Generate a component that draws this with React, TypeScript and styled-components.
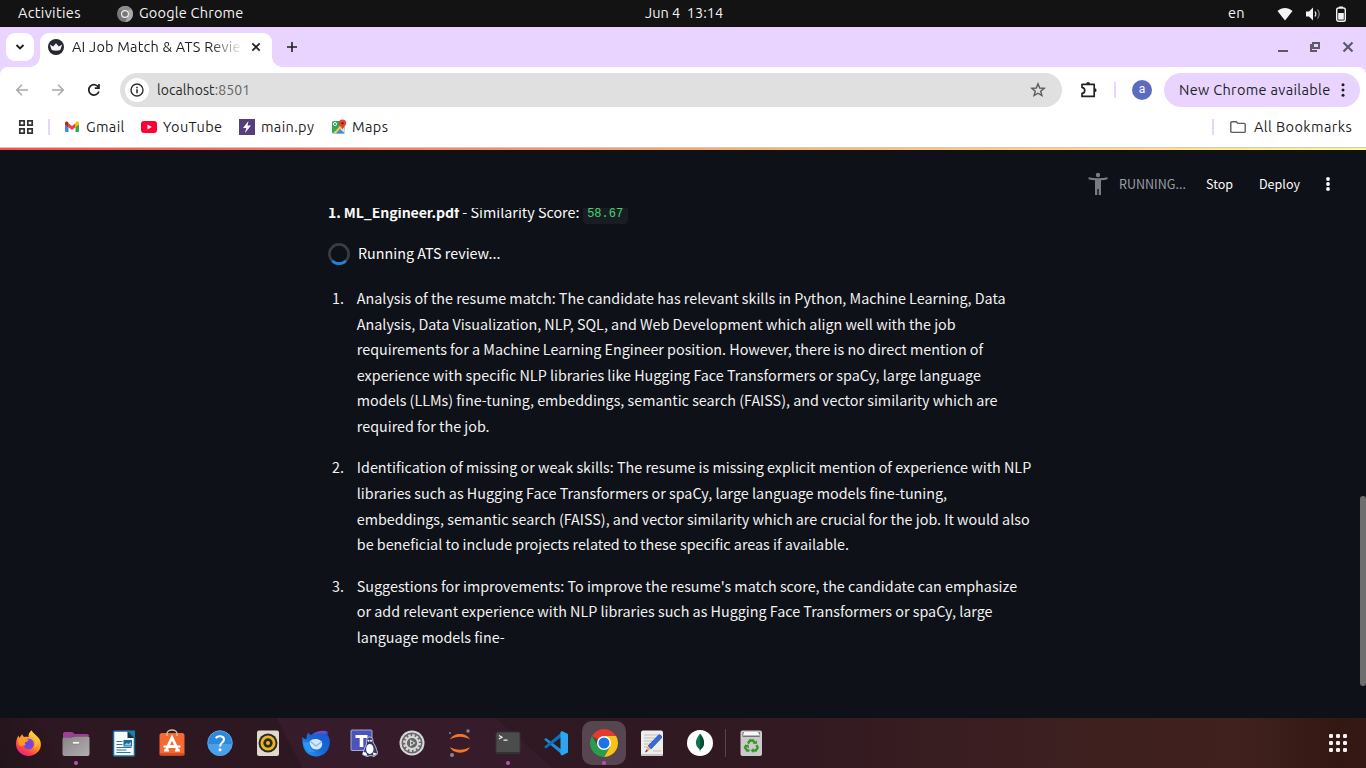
import React from "react";
import styled, { createGlobalStyle } from "styled-components";

const GlobalStyle = createGlobalStyle`
  *, *::before, *::after { box-sizing: border-box; }
  html, body { margin: 0; padding: 0; }
  body { width: 1366px; height: 768px; overflow: hidden; background: #0e1117; }
  svg { display: block; flex: none; }
`;

const uiFont = `"Ubuntu", "Noto Sans", "Open Sans", sans-serif`;
const appFont = `"Noto Sans CJK SC", "Noto Sans", sans-serif`;

const Desktop = styled.div`
  width: 1366px;
  height: 768px;
  display: flex;
  flex-direction: column;
  overflow: hidden;
  font-family: ${uiFont};
`;

/* Fixed-width single-line label; $w keeps neighbours aligned. */
const Label = styled.span<{ $w: number; $ls?: number; $size?: number }>`
  width: ${(p) => p.$w}px;
  flex: none;
  white-space: nowrap;
  font-size: ${(p) => p.$size ?? 14.5}px;
  letter-spacing: ${(p) => p.$ls ?? 0}px;
`;

/* ---------- GNOME top bar ---------- */
const SystemBar = styled.header`
  height: 27px;
  flex: none;
  background: #131313;
  color: #f2f2f2;
  display: grid;
  grid-template-columns: 1fr auto 1fr;
  align-items: center;
  line-height: 25px;
`;
const SystemLabel = styled(Label)`
  padding-bottom: 2px;
`;
const SystemLeft = styled.div`
  display: flex;
  align-items: center;
  padding-left: 18px;
`;
const AppMenu = styled.div`
  display: flex;
  align-items: center;
  gap: 6px;
  margin-left: 36px;
`;
const Clock = styled(SystemLabel)`
  white-space: pre;
`;
const SystemRight = styled.div`
  display: flex;
  align-items: center;
  justify-content: flex-end;
  padding-right: 20px;
`;
const Tray = styled.div`
  display: flex;
  align-items: center;
  gap: 13px;
  margin-left: 32px;
`;

/* ---------- Browser chrome ---------- */
const TabStrip = styled.div`
  height: 40px;
  flex: none;
  background: #e8d4ff;
  display: flex;
  align-items: flex-start;
  padding: 6px 11px 0 6px;
  color: #1f1f1f;
`;
const TabSearch = styled.button`
  width: 28px;
  height: 28px;
  border: 0;
  padding: 0;
  border-radius: 9px;
  background: #fff;
  display: grid;
  place-items: center;
`;
const Tab = styled.div`
  position: relative;
  width: 232px;
  height: 34px;
  margin-left: 6px;
  padding: 0 11px 6px 8px;
  border-radius: 9px 9px 0 0;
  background: #fff;
  display: flex;
  align-items: center;
  &::before, &::after {
    content: "";
    position: absolute;
    bottom: 0;
    width: 10px;
    height: 10px;
  }
  &::before { left: -10px; background: radial-gradient(circle at 0 0, transparent 9.5px, #fff 10px); }
  &::after { right: -10px; background: radial-gradient(circle at 100% 0, transparent 9.5px, #fff 10px); }
`;
const TabTitle = styled(Label)`
  margin: 0 10px 0 8px;
  line-height: 28px;
  -webkit-mask-image: linear-gradient(90deg, #000 138px, transparent 171px);
  mask-image: linear-gradient(90deg, #000 138px, transparent 171px);
`;
const StripIcon = styled.div<{ $ml: number }>`
  height: 28px;
  margin-left: ${(p) => p.$ml}px;
  display: flex;
  align-items: center;
`;
const WindowControls = styled.div`
  margin-left: auto;
  height: 28px;
  display: flex;
  align-items: center;
  gap: 19px;
`;
const ToolbarWrap = styled.div`
  flex: none;
  height: 81px;
  background: #e8d4ff;
`;
const ToolbarPanel = styled.div`
  height: 81px;
  background: #fff;
  border-radius: 8px 8px 0 0;
  border-bottom: 1px solid #c9c9cf;
  color: #1f1f1f;
`;
const Toolbar = styled.div`
  height: 46px;
  display: flex;
  align-items: center;
  padding: 0 6px 0 14px;
`;
const ToolbarLabel = styled(Label)`
  padding-bottom: 2px;
`;
const NavButtons = styled.div`
  display: flex;
  gap: 20px;
  width: 106px;
`;
const Omnibox = styled.div`
  width: 942px;
  height: 34px;
  margin-right: 17px;
  border-radius: 17px;
  background: #e0e0e0;
  display: flex;
  align-items: center;
  padding: 0 16px 0 5px;
`;
const SiteInfo = styled.div`
  width: 24px;
  height: 24px;
  border-radius: 50%;
  background: #fff;
  display: grid;
  place-items: center;
  margin-right: 8px;
`;
const Url = styled(Label)`
  flex: 1;
  color: #2a2a2a;
  span { color: #636363; }
`;
const Divider = styled.i<{ $mx: string }>`
  width: 2px;
  height: 16px;
  background: #e8d4ff;
  margin: ${(p) => p.$mx};
  flex: none;
`;
const Avatar = styled.div`
  width: 20px;
  height: 20px;
  border-radius: 50%;
  background: #5c6bc0;
  color: #fff;
  font: 12px/18px Roboto, sans-serif;
  text-align: center;
`;
const UpdateChip = styled.div`
  width: 196px;
  height: 34px;
  margin-left: 12px;
  border-radius: 17px;
  background: #e8d4ff;
  display: flex;
  align-items: center;
  padding-left: 15px;
`;
const Bookmarks = styled.div`
  height: 28px;
  display: flex;
  align-items: center;
  padding: 0 14px 0 18px;
`;
const Bookmark = styled.div<{ $gap: number; $mr?: number }>`
  display: flex;
  align-items: center;
  gap: ${(p) => p.$gap}px;
  margin-right: ${(p) => p.$mr ?? 0}px;
`;
const Spacer = styled.div`flex: 1;`;

/* ---------- Streamlit page ---------- */
const Page = styled.main`
  position: relative;
  flex: 1;
  min-height: 0;
  background: #0e1117;
  color: #fafafa;
  font-family: ${appFont};
  overflow: hidden;
`;
const Decoration = styled.div`
  height: 2px;
  background: linear-gradient(90deg, #ff4b4b, #fffd80);
`;
const PageHeader = styled.div`
  position: relative;
  z-index: 1;
  height: 58px;
  background: #0e1117;
  display: flex;
  align-items: center;
  justify-content: flex-end;
  padding: 10px 35px 0 0;
  line-height: 20px;
`;
const Status = styled.div`
  display: flex;
  align-items: center;
  gap: 11px;
  color: #9a9da4;
`;
const Content = styled.div`
  width: 710px;
  margin: -9px 0 0 328px;
  font-size: 14.33px;
  line-height: 25.6px;
`;
const Match = styled.div`
  height: 26px;
  white-space: nowrap;
  b { font-weight: 700; font-size: 14.1px; letter-spacing: -0.1px; }
`;
const Score = styled.code`
  font: 12px/16px "Liberation Mono", monospace;
  color: #3dd56d;
  background: #1a1c24;
  border-radius: 4px;
  padding: 3px 4.5px;
  vertical-align: 1px;
`;
const Spinner = styled.div`
  display: flex;
  align-items: center;
  gap: 8px;
  height: 26px;
  margin-top: 15px;
  white-space: nowrap;
  svg { margin-top: 2px; }
`;
const Findings = styled.ol`
  list-style: none;
  margin: 18.92px 0 0;
  padding: 0;
  color: #f2f2f2;
`;
const Finding = styled.li`
  display: flex;
  margin-bottom: 16px;
`;
const Number = styled.span`
  width: 28.8px;
  padding-left: 4px;
  flex: none;
`;
const Line = styled.span`
  display: block;
  white-space: nowrap;
`;
const ScrollThumb = styled.div`
  position: absolute;
  right: 0;
  top: 348px;
  width: 6px;
  height: 190px;
  border-radius: 3px;
  background: #6e6e6f;
`;

/* ---------- Dock ---------- */
const DockBar = styled.nav`
  height: 50px;
  flex: none;
  display: flex;
  align-items: center;
  padding: 0 12px 0 4px;
  background:
    linear-gradient(63deg, #22131a 0, #2d1721 60px, #2d1822 269px, transparent 270px),
    linear-gradient(41deg, #361c2b 362px, transparent 363px),
    linear-gradient(90deg, #2f1923 480px, #2f1821 640px, #331a22 800px, #3e201f 1100px, #40211e 1240px, #331713 1340px, #351814 1366px);
`;
const DockItem = styled.div<{ $active?: boolean; $running?: boolean }>`
  position: relative;
  width: 44px;
  height: 44px;
  margin: 0 2px;
  border-radius: 10px;
  display: grid;
  place-items: center;
  background: ${(p) => (p.$active ? "#574650" : "transparent")};
  &::after {
    content: "";
    display: ${(p) => (p.$running ? "block" : "none")};
    position: absolute;
    left: 20px;
    bottom: 0;
    width: 4px;
    height: 4px;
    border-radius: 50%;
    background: #b752b5;
  }
`;
const DockSeparator = styled.i`
  width: 1px;
  height: 28px;
  background: #5b434b;
  margin: 0 1px;
`;
const DockGrid = styled.div`
  margin-left: auto;
  width: 32px;
  display: grid;
  place-items: center;
`;

const Dots = ({ color, h, r, gap }: { color: string; h: number; r: number; gap: number }) => (
  <svg width="6" height={h} viewBox={`-3 ${-h / 2} 6 ${h}`} fill={color}>
    <circle cy={-gap} r={r} /><circle r={r} /><circle cy={gap} r={r} />
  </svg>
);

const ChromeMono = () => (
  <svg width="16" height="16" viewBox="0 0 16 16">
    <circle cx="8" cy="8" r="8" fill="#777" />
    <path d="M8 0A8 8 0 0 1 16 8 8 8 0 0 1 8 16L11.5 10 11.5 5z" fill="#aaa" />
    <path d="M1.1 4A8 8 0 0 1 15 4H8z" fill="#8c8c8c" />
    <circle cx="8" cy="8" r="4" fill="#eee" /><circle cx="8" cy="8" r="2.8" fill="#777" />
  </svg>
);

const dockIcons: { name: string; running?: boolean; active?: boolean; art: React.ReactNode }[] = [
  { name: "firefox", art: <>
    <defs>
      <linearGradient id="ff" x1="22" y1="3" x2="8" y2="26" gradientUnits="userSpaceOnUse"><stop stopColor="#ffe23f" /><stop offset=".45" stopColor="#ff9a20" /><stop offset=".8" stopColor="#ff3d49" /><stop offset="1" stopColor="#e6218b" /></linearGradient>
      <radialGradient id="ffp"><stop stopColor="#5a4be0" /><stop offset="1" stopColor="#9140d0" /></radialGradient>
    </defs>
    <path d="M17.500 1.300c1 1.800 2.200 3 4.200 4.600 3 2.600 5.200 5.200 5.200 9.400C26.900 22 21.200 27 14.500 27S2 21.700 2 15c0-3.500 1-6.600 2.500-8.500.2 1.300.7 1.900 1.300 2.400C6.200 7.100 7.300 6 8.500 5.200c0 1.500.7 2.300 1.800 2.800 1.200-.4 3-.3 4.200.2C14.200 5.600 15.500 3 17.500 1.300z" fill="url(#ff)" />
    <circle cx="14.500" cy="15" r="5.500" fill="url(#ffp)" />
    <path d="M4.500 9.500c2-1.700 5-1.400 6.500 0 1 .9 2.700.8 3.700 1-.4 1.600-2 2-3.100 2.600-.9.500-.8 2-.2 3.200-3-.3-3.300 2-5.400.7C4 15.500 4 12 4.500 9.500z" fill="#ff9b25" />
    <path d="M19 8c3 3 3.500 8 .5 11 4-1 5-5.500 3.500-9-.8-1-2.500-2-4-2z" fill="#ffc52e" opacity=".75" />
  </> },
  { name: "files", running: true, art: <>
    <defs><linearGradient id="fl" x1="0" y1="0" x2="1" y2="1"><stop stopColor="#868484" /><stop offset="1" stopColor="#b0aeae" /></linearGradient></defs>
    <path d="M1 5a2 2 0 0 1 2-2h7l3 2h12a2 2 0 0 1 2 2v6H1z" fill="#9b3f98" />
    <path d="M1 9l8-1 3-1h15v7H1z" fill="#702d70" />
    <path d="M0.500 10a1.500 1.500 0 0 1 1.500-1.500h7l3-1h14a1.500 1.500 0 0 1 1.500 1.500v16a2 2 0 0 1-2 2h-23a2 2 0 0 1-2-2z" fill="url(#fl)" />
    <rect x="10.500" y="12.500" width="7" height="2.500" rx="1" fill="#f5f5f5" stroke="#777" strokeWidth=".5" />
  </> },
  { name: "writer", art: <>
    <path d="M4.500 2h14l6 6v18a1 1 0 0 1-1 1h-19a1 1 0 0 1-1-1V3a1 1 0 0 1 1-1z" fill="#f7f9fa" stroke="#176b94" strokeWidth="1.500" />
    <path d="M18 1.500h7v7z" fill="#1682b0" /><path d="M17.500 2l7 7h-7z" fill="#08384f" />
    <g stroke="#2676a4" strokeWidth="1.200"><path d="M6.500 12.500h6M6.500 15.500h6M6.500 18.500h15M6.500 21h10M6.500 23.500h14" /></g>
    <rect x="13.500" y="11" width="8.500" height="6.500" fill="#1d6b99" /><path d="M14.500 16l2-2 2 1 2.500-2v3.500h-6.500z" fill="#90cbe7" />
  </> },
  { name: "software", art: <>
    <rect x="1.500" y="4" width="25" height="22.500" rx="2.500" fill="#f46a32" /><rect x="1.500" y="24" width="25" height="2.500" rx="1" fill="#d94f25" />
    <path d="M9 7V5a5 4 0 0 1 10 0v2" fill="none" stroke="#d7b997" strokeWidth="1.500" />
    <path d="M8 21.500l6-13 6 13M10 17.500h8" fill="none" stroke="#fff" strokeWidth="2.800" /><path d="M6 21.500h5M17 21.500h5M5.500 17.500h17" stroke="#fff" strokeWidth="1.800" />
  </> },
  { name: "help", art: <>
    <circle cx="14" cy="14" r="12.300" fill="#2a89dc" stroke="#67b4ef" strokeWidth=".8" /><path d="M2 15a12 12 0 0 0 24 0z" fill="#4aa1e8" />
    <path d="M10 9.300C11 6.500 18 6.400 18 10.500c0 3-4 3.200-4 7" fill="none" stroke="#fff" strokeWidth="2.100" /><circle cx="14" cy="20.800" r="1.500" fill="#fff" />
  </> },
  { name: "music", art: <>
    <rect x="3" y="1.500" width="22" height="25.500" rx="2" fill="#e1d9cd" /><circle cx="14" cy="14" r="9.500" fill="#2b2b2b" />
    <circle cx="14" cy="14" r="7.500" fill="#edb61b" /><circle cx="14" cy="14" r="4.700" fill="#2b2b2b" /><circle cx="14" cy="14" r="2" fill="#edb61b" />
  </> },
  { name: "thunderbird", art: <>
    <defs><linearGradient id="tb" x1="1" y1="0" x2="0" y2="1"><stop stopColor="#1a56cf" /><stop offset=".5" stopColor="#1668d8" /><stop offset="1" stopColor="#2a9af5" /></linearGradient></defs>
    <path d="M.3 8c1.500 2 3 2.300 4.500 1.500C4.300 7 5 5 6.500 3.500 7 5 8 6 9.500 6 12 3 16 2 19.500 2.300c3-.8 5.500-.3 7.200 1.700-1 .2-1.500.8-1.300 2C28 9 28.500 13.500 27 18c-1.700 5.500-6.500 9-12.500 9.500C7 27.500 1.500 22.500.8 15 .5 12.500 0 10.500.3 8z" fill="url(#tb)" />
    <path d="M11 6c3.500-4 9-5 14.500-3.500-1.500.2-2 1-1.500 2.200-4.500-1-9-.6-13 1.300z" fill="#7748d0" />
    <path d="M7.500 12.500C9.500 10 13 9.500 16 10.300c2.500.8 4.500 2.700 4.200 5C19.700 19 17.500 20.500 14 20.500c-3.500 0-6.500-3.500-6.500-8z" fill="#d5e9fb" />
    <path d="M8.500 12.500l5.500 4.500 6-4.500" fill="none" stroke="#84b7ea" strokeWidth="1.300" />
    <path d="M.8 13c2 .5 4.500.5 6.200 0 .5 6 3 9 7 9.500-5.500 2-10.500.5-13.200-9.500z" fill="#2a98f3" />
  </> },
  { name: "teams", art: <>
    <rect x="1" y="1" width="21" height="20.500" rx="1" fill="#4b53bc" stroke="#c3c5e9" strokeWidth=".8" />
    <path d="M5.500 6h12v3h-4.200v9H9.700V9H5.500z" fill="#fff" />
    <path d="M19.500 8c2.500 0 3.500 1.800 3.500 4.500 0 2 3 4 3.500 8l1.500 4-4 3-3-1-4 1-4.500-2 1-3 1-3c1-3 2-3 2-6S17 8 19.500 8z" fill="#343970" stroke="#ddddf0" strokeWidth=".8" />
    <ellipse cx="19.800" cy="20" rx="3.700" ry="5" fill="#fff" /><circle cx="18.500" cy="11.800" r="1" fill="#fff" /><circle cx="21" cy="11.800" r="1" fill="#fff" />
    <path d="M13 23l3 .5 1.500 3.500-4.500-1.500zM23 23.500l4 1-3.500 2.500z" fill="#fff" />
  </> },
  { name: "settings", art: <>
    <circle cx="14" cy="14" r="12.500" fill="#d8d8d8" /><circle cx="14" cy="14" r="10.500" fill="#686868" />
    <circle cx="14" cy="14" r="7.500" fill="none" stroke="#d7d7d7" strokeWidth="2.800" strokeDasharray="2.300 1.630" />
    <circle cx="14" cy="14" r="6" fill="#666" stroke="#d7d7d7" strokeWidth="1.800" />
    <path d="M12 10.500l5.500 3.500-5.500 3.500z" fill="#d7d7d7" /><circle cx="14" cy="14" r="1.200" fill="#666" />
  </> },
  { name: "jupyter", art: <>
    <path d="M4 10.500C7 3 21 3 24 10.500 18 6.800 10 6.800 4 10.500zM4 18C7 25.500 21 25.500 24 18 18 21.700 10 21.700 4 18z" fill="#f37726" />
    <circle cx="22" cy="2" r="1.700" fill="#8c8387" /><circle cx="4" cy="4" r="1.100" fill="#81757a" /><circle cx="6" cy="26" r="2" fill="#918689" />
  </> },
  { name: "terminal", running: true, art: <>
    <rect x="2" y="3" width="24" height="21.500" rx="1.800" fill="#4c4c4c" stroke="#343434" /><rect x="2" y="23" width="24" height="2" rx="1" fill="#333" />
    <path d="M5 6.500l3 1.800L5 10M9.500 11.200h4" fill="none" stroke="#f4f4f4" strokeWidth="1.200" />
  </> },
  { name: "vscode", art: <>
    <path d="M2 10.500L4 9l16 12v4.500z" fill="#1b8ed6" /><path d="M2 18l2 1.500L20 7.500V3z" fill="#0675bb" />
    <path d="M20 2l6 3v18.500L20 26.500l-1.500-1V3z" fill="#2ba6ef" />
  </> },
  { name: "chrome", running: true, active: true, art: <>
    <path d="M14 14L1.900 7A14 14 0 0 1 26.100 7H14z" fill="#e33b2e" /><path d="M14 14l6.060 3.500L14 28A14 14 0 0 0 26.100 7H14z" fill="#fcc419" />
    <path d="M14 14l6.060 3.500L14 28A14 14 0 0 1 1.900 7L8 17.500z" fill="#289e4c" />
    <circle cx="14" cy="14" r="7" fill="#fff" /><circle cx="14" cy="14" r="5.500" fill="#1b73e8" />
  </> },
  { name: "editor", art: <>
    <rect x="3" y="1.500" width="22" height="25.500" rx="2" fill="#eeeded" /><rect x="3" y="25" width="22" height="2" rx="1" fill="#c7c5c4" />
    <path d="M6 6h16M6 9h11M6 12h9M6 15h7M6 18h5M15 22h8" stroke="#c1bdb9" strokeWidth="1" />
    <path d="M10 17L20 6.500a2 2 0 0 1 3 3L13 20z" fill="#3869d8" stroke="#244aaa" strokeWidth=".7" /><path d="M10 17l3 3-6 3.500z" fill="#edad7c" /><path d="M8.500 20.500L7 23.500l3-1.500z" fill="#503b34" />
  </> },
  { name: "mongodb", art: <>
    <circle cx="14" cy="14" r="13" fill="#fff" /><path d="M14 4.500c2.500 3 4.500 6 4 10-.3 3-2 4.500-3.500 6l-.5 2.500-.5-2.500c-1.500-1.500-3.300-3-3.500-6-.4-4 2-7 4-10z" fill="#0b7650" /><path d="M14 5c2.500 3 4.500 6 4 10-.4 3-2 4.500-4 6z" fill="#034d38" />
  </> },
];

const TrashArt = () => (
  <svg width="28" height="28" viewBox="0 0 28 28">
    <rect x="3.500" y="1.500" width="21.500" height="25.500" rx="2" fill="#cbcaca" /><rect x="5.500" y="3" width="17.500" height="5" rx="1" fill="#747474" />
    <path d="M6 6.500l1-3.500h14l2 3.500z" fill="#f7f7f7" />
    <path d="M11 14.500l2-3h3l2 3M19.500 16l1.200 2.500-1.800 3H16M12.500 21.500H10L8 18.500l1.700-2.500" fill="none" stroke="#379827" strokeWidth="2.400" />
    <path d="M16 14.800h4v-3.600zM16.500 19v5l-3-2.500zM7.500 16.500l4-1 .5 4z" fill="#379827" />
  </svg>
);

const findings: string[][] = [
  [
    "Analysis of the resume match: The candidate has relevant skills in Python, Machine Learning, Data",
    "Analysis, Data Visualization, NLP, SQL, and Web Development which align well with the job",
    "requirements for a Machine Learning Engineer position. However, there is no direct mention of",
    "experience with specific NLP libraries like Hugging Face Transformers or spaCy, large language",
    "models (LLMs) fine-tuning, embeddings, semantic search (FAISS), and vector similarity which are",
    "required for the job.",
  ],
  [
    "Identification of missing or weak skills: The resume is missing explicit mention of experience with NLP",
    "libraries such as Hugging Face Transformers or spaCy, large language models fine-tuning,",
    "embeddings, semantic search (FAISS), and vector similarity which are crucial for the job. It would also",
    "be beneficial to include projects related to these specific areas if available.",
  ],
  [
    "Suggestions for improvements: To improve the resume's match score, the candidate can emphasize",
    "or add relevant experience with NLP libraries such as Hugging Face Transformers or spaCy, large",
    "language models fine-",
  ],
];

export default function App() {
  return (
    <Desktop>
      <GlobalStyle />
      <SystemBar>
        <SystemLeft>
          <SystemLabel $w={63} $ls={0.33}>Activities</SystemLabel>
          <AppMenu>
            <ChromeMono />
            <SystemLabel $w={105} $ls={0.22}>Google Chrome</SystemLabel>
          </AppMenu>
        </SystemLeft>
        <Clock $w={76}>{"Jun 4  13:14"}</Clock>
        <SystemRight>
          <SystemLabel $w={17} $ls={0.3}>en</SystemLabel>
          <Tray>
            <svg width="16" height="14" viewBox="0 0 16 14"><path d="M.5 4C5-.1 11-.1 15.500 4L8 13.500z" fill="#f4f4f4" /></svg>
            <svg width="17" height="14" viewBox="0 0 17 14"><path d="M0 4.500h3L7 .5v13l-4-4H0z" fill="#f4f4f4" /><path d="M9 4.500q1.700 2.500 0 5" fill="none" stroke="#e5e5e5" strokeWidth="1.300" /><path d="M11.500 2.500q3.500 4.500 0 9" fill="none" stroke="#777" strokeWidth="1.300" /></svg>
            <svg width="10" height="16" viewBox="0 0 10 16"><rect x=".7" y="2" width="8.600" height="13.200" rx="1.800" fill="none" stroke="#f4f4f4" strokeWidth="1.400" /><path d="M3 .5h4V2H3z" fill="#f4f4f4" /><path d="M2.200 7h5.600v6.600H2.200z" fill="#f4f4f4" /></svg>
          </Tray>
        </SystemRight>
      </SystemBar>

      <TabStrip>
        <TabSearch aria-label="Search tabs">
          <svg width="10" height="8" viewBox="0 0 10 8"><path d="M1.500 2L5 5.500 8.500 2" fill="none" stroke="#1f1f1f" strokeWidth="1.900" /></svg>
        </TabSearch>
        <Tab>
          <svg width="16" height="16" viewBox="0 0 16 16"><circle cx="8" cy="8" r="8" fill="#262730" /><path d="M1.800 5.500l3.400 2L8 4.200l2.800 3.300 3.400-2-1.900 5.500Q8 12.300 3.700 11z" fill="#f3f3f5" /></svg>
          <TabTitle $w={169} $ls={0.2}>AI Job Match &amp; ATS Revie</TabTitle>
          <svg width="10" height="10" viewBox="0 0 10 10"><path d="M1.300 1.300l7.400 7.400M8.700 1.300L1.300 8.700" stroke="#1f1f1f" strokeWidth="1.700" /></svg>
        </Tab>
        <StripIcon $ml={15}><svg width="10" height="10" viewBox="0 0 10 10"><path d="M5 0v10M0 5h10" stroke="#1f1f1f" strokeWidth="1.600" /></svg></StripIcon>
        <WindowControls>
          <svg width="14" height="12" viewBox="0 0 14 12"><path d="M3 10h10" stroke="#5c5763" strokeWidth="2" /></svg>
          <svg width="14" height="12" viewBox="0 0 14 12"><path d="M5 2h6v5H5zM3 3v7h6" fill="none" stroke="#5c5763" strokeWidth="1.900" /></svg>
          <svg width="14" height="12" viewBox="0 0 14 12"><path d="M2.500 1.500l9 9M11.500 1.500l-9 9" stroke="#5c5763" strokeWidth="2.100" /></svg>
        </WindowControls>
      </TabStrip>

      <ToolbarWrap>
        <ToolbarPanel>
          <Toolbar>
            <NavButtons>
              <svg width="16" height="16" viewBox="0 0 16 16"><path d="M14 8H3M8 2.800L2.800 8 8 13.200" fill="none" stroke="#a9a9a9" strokeWidth="1.500" /></svg>
              <svg width="16" height="16" viewBox="0 0 16 16"><path d="M2 8h11M8 2.800L13.200 8 8 13.200" fill="none" stroke="#a9a9a9" strokeWidth="1.500" /></svg>
              <svg width="16" height="16" viewBox="0 0 16 16"><path d="M12.900 9.500A5.200 5.200 0 1 1 12.500 5.400" fill="none" stroke="#1f1f1f" strokeWidth="1.700" /><path d="M13.800 2v5H8.800V5.300h3.300V2z" fill="#1f1f1f" /></svg>
            </NavButtons>
            <Omnibox>
              <SiteInfo>
                <svg width="14" height="14" viewBox="0 0 14 14"><circle cx="7" cy="7" r="6" fill="none" stroke="#303030" strokeWidth="1.400" /><path d="M6.200 6.200h1.600V10.200H6.200zM6.200 3.700h1.600v1.500H6.200z" fill="#303030" /></svg>
              </SiteInfo>
              <Url $w={880} $size={14} $ls={0.08}>localhost<span>:8501</span></Url>
              <svg width="16" height="16" viewBox="0 0 16 16"><path d="M8 1.800l1.700 4.200 4.500.3-3.500 2.900 1.200 4.400L8 11.200l-3.900 2.400 1.200-4.400-3.500-2.900 4.500-.3z" fill="none" stroke="#5c5c5c" strokeWidth="1.400" /></svg>
            </Omnibox>
            <svg width="20" height="20" viewBox="0 0 20 20"><path d="M3 4.400H15.200V16.400H3V13.400c3.600-.4 3.600-5.600 0-6z" fill="none" stroke="#222" strokeWidth="1.700" strokeLinejoin="round" /><path d="M7.200 4a1.900 1.900 0 0 1 3.800 0zM15.700 8.300a1.900 1.900 0 0 1 0 3.800z" fill="#222" /></svg>
            <Divider $mx="0 16px 0 15px" />
            <Avatar>a</Avatar>
            <UpdateChip>
              <ToolbarLabel $w={161} $ls={0.33}>New Chrome available</ToolbarLabel>
              <Dots color="#1f1f1f" h={16} r={1.5} gap={5.300} />
            </UpdateChip>
          </Toolbar>
          <Bookmarks>
            <svg width="16" height="16" viewBox="0 0 16 16"><path d="M1.800 1.800h4.400v4.400H1.800zM9.800 1.800h4.400v4.400H9.800zM1.800 9.800h4.400v4.400H1.800zM9.800 9.800h4.400v4.400H9.800z" fill="none" stroke="#333" strokeWidth="1.700" /></svg>
            <Divider $mx="0 14px" />
            <Bookmark $gap={6} $mr={16}>
              <svg width="16" height="16" viewBox="0 0 16 16"><path d="M1 3.500L4.500 6v7H2a1 1 0 0 1-1-1z" fill="#4285f4" /><path d="M11.500 6L15 3.500V12a1 1 0 0 1-1 1h-2.500z" fill="#34a853" /><path d="M4.500 4.200L8 7l3.500-2.800v4L8 11 4.500 8.200z" fill="#ea4335" /><path d="M1 4.200c0-1.700 1.600-2.100 2.700-1.300l.8.700v4.600L1 5.500z" fill="#c5221f" /><path d="M15 4.200c0-1.700-1.600-2.100-2.700-1.300l-.8.700v4.600L15 5.500z" fill="#fbbc04" /></svg>
              <ToolbarLabel $w={39} $ls={0.35}>Gmail</ToolbarLabel>
            </Bookmark>
            <Bookmark $gap={6} $mr={17}>
              <svg width="16" height="16" viewBox="0 0 16 16"><rect y="2" width="16" height="12" rx="3" fill="#f03" /><path d="M6.500 5.500L10.800 8l-4.300 2.500z" fill="#fff" /></svg>
              <ToolbarLabel $w={59} $ls={0.35}>YouTube</ToolbarLabel>
            </Bookmark>
            <Bookmark $gap={6} $mr={16}>
              <svg width="16" height="16" viewBox="0 0 16 16"><path fill="#563d7c" d="M0 0h16v16H0z" /><path d="M9.500 2L4 9h3.200L6 14l6-7.500H8.500z" fill="#fff" /></svg>
              <ToolbarLabel $w={54} $ls={0.35}>main.py</ToolbarLabel>
            </Bookmark>
            <Bookmark $gap={5}>
              <svg width="16" height="16" viewBox="0 0 16 16"><rect x="1" y="2" width="12.500" height="12.500" rx="1.500" fill="#34a853" /><path d="M2 14.500L10 6l3.500 4v3.500a1 1 0 0 1-1 1z" fill="#dfe3e8" /><path d="M10 6l2 2-6.500 6.500H3z" fill="#fbc02d" /><path d="M9 10l4.500 4v.500H5z" fill="#4285f4" /><circle cx="4" cy="5" r="1.600" fill="none" stroke="#fff" /><path d="M11.500.5a3.700 3.700 0 0 1 3.700 3.700c0 2.500-3 3.500-3.700 6.500-.7-3-3.700-4-3.700-6.500A3.700 3.700 0 0 1 11.500.5z" fill="#e94235" /><circle cx="11.500" cy="4.200" r="1.200" fill="#8c1a12" /></svg>
              <ToolbarLabel $w={38} $ls={0.4}>Maps</ToolbarLabel>
            </Bookmark>
            <Spacer />
            <Divider $mx="0 16px 0 0" />
            <Bookmark $gap={8}>
              <svg width="16" height="14" viewBox="0 0 16 14"><path d="M1.800 1.700h4.400l1.700 1.700h6.300a1 1 0 0 1 1 1v7a1 1 0 0 1-1 1H1.800a1 1 0 0 1-1-1v-8.700a1 1 0 0 1 1-1z" fill="none" stroke="#5c5c5c" strokeWidth="1.400" /></svg>
              <ToolbarLabel $w={98} $ls={0.4}>All Bookmarks</ToolbarLabel>
            </Bookmark>
          </Bookmarks>
        </ToolbarPanel>
      </ToolbarWrap>

      <Page>
        <Decoration />
        <PageHeader>
          <Status>
            <svg width="20" height="24" viewBox="0 0 20 24" fill="#7b7c80"><circle cx="10" cy="3" r="2.200" /><path d="M.5 5.200Q10 7.500 19.500 5.200v2Q16 8.100 13 8.300V23h-2.300v-6H9.300v6H7V8.300Q4 8.100.5 7.200z" /></svg>
            <Label $w={87} $size={12.54}>RUNNING...</Label>
          </Status>
          <Label $w={53} $size={12.54}>Stop</Label>
          <Label $w={66} $size={12.54}>Deploy</Label>
          <Dots color="#fafafa" h={16} r={1.900} gap={5} />
        </PageHeader>
        <Content>
          <Match><b>1. ML_Engineer.pdf</b> - Similarity Score: <Score>58.67</Score></Match>
          <Spinner>
            <svg width="22" height="22" viewBox="0 0 22 22" fill="none" strokeWidth="2.600"><circle cx="11" cy="11" r="9.600" stroke="#3b3d42" /><path d="M4.200 17.800A9.600 9.600 0 0 0 17.800 17.800" stroke="#1c83e1" /></svg>
            <Line>Running ATS review...</Line>
          </Spinner>
          <Findings>
            {findings.map((lines, i) => (
              <Finding key={i}>
                <Number>{i + 1}.</Number>
                <div>{lines.map((text) => <Line key={text}>{text}</Line>)}</div>
              </Finding>
            ))}
          </Findings>
        </Content>
        <ScrollThumb />
      </Page>

      <DockBar>
        {dockIcons.map((d) => (
          <DockItem key={d.name} $active={d.active} $running={d.running}>
            <svg width="28" height="28" viewBox="0 0 28 28">{d.art}</svg>
          </DockItem>
        ))}
        <DockSeparator />
        <DockItem><TrashArt /></DockItem>
        <DockGrid>
          <svg width="18" height="18" viewBox="0 0 18 18" fill="#f6f3f2">
            {[2, 9, 16].flatMap((y) => [2, 9, 16].map((x) => <rect key={`${x}-${y}`} x={x - 2} y={y - 2} width="4" height="4" rx="1.300" />))}
          </svg>
        </DockGrid>
      </DockBar>
    </Desktop>
  );
}
